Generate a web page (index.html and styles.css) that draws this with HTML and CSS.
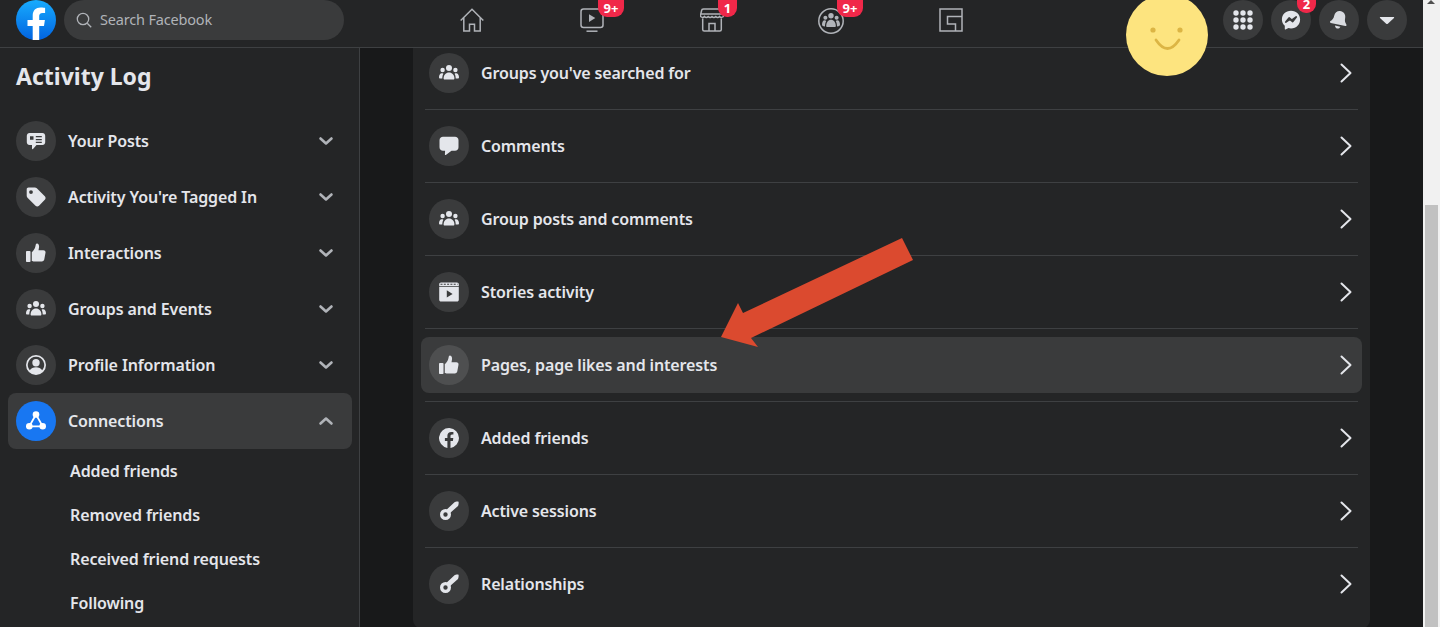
FILE: index.html
```html
<!DOCTYPE html>
<html lang="en">
<head>
<meta charset="utf-8">
<title>Activity Log</title>
<link rel="stylesheet" href="styles.css">
</head>
<body>
<svg class="defs" width="0" height="0" aria-hidden="true">
  <symbol id="i-groups" viewBox="0 0 20 20"><circle cx="10" cy="5" r="3"/><circle cx="3.6" cy="7" r="2.2"/><circle cx="16.4" cy="7" r="2.2"/><path d="M4.6 15.5c0-3.6 2.3-6 5.4-6s5.4 2.4 5.4 6c0 .6-.4 1-1 1H5.600c-.6 0-1-.4-1-1z"/><path d="M3.300 15.600c0-2 .4-3.600 1.100-4.800-.5-.4-1-.5-1.600-.5-1.700 0-2.800 1.700-2.800 4 0 .8.500 1.300 1.200 1.300z"/><path d="M16.700 15.600c0-2-.4-3.600-1.100-4.800.5-.4 1-.5 1.600-.5 1.700 0 2.800 1.700 2.800 4 0 .8-.5 1.300-1.200 1.300z"/></symbol>
  <symbol id="i-like" viewBox="0 0 20 20"><rect x="0" y="8" width="4.500" height="11" rx=".8"/><path d="M5.800 18V9.200c1.700-1.300 3.200-3.500 3.700-6.200.2-1.200.3-2.600 1.500-2.600 1.800 0 2.300 2.300 2 4.200l-.5 2.600h4.800c1.500 0 2.500 1.100 2.200 2.500l-1.200 6.600c-.2 1.300-1.200 2.200-2.500 2.200H8.400c-1.400 0-2-.5-2.600-.5z"/></symbol>
  <symbol id="i-key" viewBox="0 0 20 20"><path fill-rule="evenodd" d="M6.500 8a5.500 5.500 0 1 1 0 11 5.500 5.500 0 0 1 0-11zm0 3.300a2.200 2.200 0 1 0 0 4.400 2.200 2.200 0 0 0 0-4.400z"/><path d="M7.500 8.700 15.500 1.200c.6-.5 3.600-.9 4-.4.4.5 0 3.600-.5 4.200l-8.500 7.500z"/></symbol>
  <symbol id="i-chev" viewBox="0 0 24 24"><path d="M7.500 3.500 16.500 12l-9 8.500" fill="none" stroke="#e4e6eb" stroke-width="2" stroke-linecap="round" stroke-linejoin="round"/></symbol>
  <symbol id="i-down" viewBox="0 0 16 16"><path d="M2.500 5.500 8 10.500l5.500-5" fill="none" stroke="#b0b3b8" stroke-width="2.600" stroke-linecap="round" stroke-linejoin="round"/></symbol>
</svg>

<div class="window">
  <div class="page">
    <header class="topbar">
      <div class="top-left">
        <svg class="logo" viewBox="0 0 40 40"><defs><linearGradient id="fb" x1="0" y1="0" x2="0" y2="1"><stop offset="0" stop-color="#18acfe"/><stop offset="1" stop-color="#0163e0"/></linearGradient></defs><circle cx="20" cy="20" r="20" fill="url(#fb)"/><path fill="#fff" d="M16.700 40V26h-5.200v-6h5.200v-4.300c0-5.300 3.100-8.200 7.900-8.200 2.300 0 4.500.4 4.500.4v5.100h-2.600c-2.500 0-3.300 1.600-3.300 3.200v3.800h5.700l-.9 6h-4.800v14z"/></svg>
        <div class="search">
          <svg class="search-icon" viewBox="0 0 16 16"><circle cx="7" cy="7" r="5.700"/><path d="m11.200 11.200 4 4"/></svg>
          <span class="search-text">Search Facebook</span>
        </div>
      </div>
      <nav class="top-nav">
        <div class="tab">
          <svg class="tab-icon" viewBox="0 0 24 24"><path d="M.700 12.500 12 1.200l11.300 11.300M3.800 9.700V23h5.700v-6.800h5V23h5.700V9.700"/></svg>
        </div>
        <div class="tab">
          <svg class="tab-icon" viewBox="0 0 24 24"><rect x="1" y="1" width="22" height="18.500" rx="2.500"/><path d="M6.500 23.200h11"/><path class="solid" d="M9 6.300v7.600l6.300-3.800z"/></svg>
          <span class="badge badge-watch">9+</span>
        </div>
        <div class="tab">
          <svg class="tab-icon" viewBox="0 0 24 24"><path d="M3.500 1h17c1 0 1.500.4 1.800 1.200L23.500 7v1.500c-1.600 1.300-3 1.300-3.900 0-1.300 1.300-2.700 1.300-3.800 0-1.300 1.300-2.600 1.300-3.800 0-1.200 1.300-2.500 1.300-3.800 0-1.100 1.300-2.500 1.300-3.800 0-.9 1.300-2.300 1.300-3.900 0V7l1.200-4.800C1.700 1.400 2.500 1 3.500 1zM.500 6h23M2.700 10.500V21.500c0 1 .6 1.500 1.500 1.500h15.600c.9 0 1.500-.5 1.500-1.500V10.500M9 23v-7.500h6V23"/></svg>
          <span class="badge badge-market">1</span>
        </div>
        <div class="tab">
          <svg class="tab-icon wide shift" viewBox="0 0 26 26"><circle cx="13" cy="13" r="12.200"/><g class="solid"><circle cx="13" cy="7.800" r="2.700"/><circle cx="7.400" cy="9.800" r="2"/><circle cx="18.600" cy="9.800" r="2"/><path d="M8.200 18c0-3.600 2.100-6.300 4.800-6.300s4.800 2.700 4.800 6.300c0 .6-.4 1-1 1H9.200c-.6 0-1-.4-1-1z"/><path d="M7 18.500c0-2.400.4-4 1.200-5.600-.5-.4-1-.6-1.500-.6-1.700 0-2.700 2-2.700 4.300 0 1.200.9 1.900 3 1.900z"/><path d="M19 18.500c0-2.400-.4-4-1.200-5.600.5-.4 1-.6 1.500-.6 1.700 0 2.700 2 2.700 4.300 0 1.200-.9 1.900-3 1.900z"/></g></svg>
          <span class="badge badge-groups">9+</span>
        </div>
        <div class="tab">
          <svg class="tab-icon shift" viewBox="0 0 24 24"><path d="M1 1h22v22H1zM16.500 23v-7h-8V8.500H23"/></svg>
        </div>
      </nav>
      <div class="top-right">
        <div class="round">
          <svg class="round-icon" viewBox="0 0 20 20"><g fill="#e4e6eb"><circle cx="3" cy="3" r="2.700"/><circle cx="10" cy="3" r="2.700"/><circle cx="17" cy="3" r="2.700"/><circle cx="3" cy="10" r="2.700"/><circle cx="10" cy="10" r="2.700"/><circle cx="17" cy="10" r="2.700"/><circle cx="3" cy="17" r="2.700"/><circle cx="10" cy="17" r="2.700"/><circle cx="17" cy="17" r="2.700"/></g></svg>
        </div>
        <div class="round">
          <svg class="round-icon" viewBox="0 0 20 20"><path fill="#e4e6eb" d="M10 .800C4.600.800.900 4.700.900 9.500c0 2.600 1.100 4.800 2.900 6.300v3.100c0 .4.400.6.700.5l3-1.300c.8.200 1.600.3 2.500.3 5.400 0 9.100-3.900 9.100-8.900S15.400.800 10 .800z"/><path fill="none" stroke="#3a3b3c" stroke-width="1.800" stroke-linejoin="round" stroke-linecap="round" d="m4.800 12 3.300-4 2.700 2.300L15.200 7l-3.500 4.500-2.800-2.200z"/></svg>
          <span class="badge badge-msg">2</span>
        </div>
        <div class="round">
          <svg class="round-icon bell" viewBox="0 0 20 20"><path fill="#d9dbe0" d="M10 1c3.300 0 5.600 2.500 5.600 5.800 0 3 1 4.500 2.500 6 .7.700.3 1.800-.7 1.800H2.600c-1 0-1.400-1.100-.7-1.800 1.500-1.500 2.500-3 2.500-6C4.400 3.500 6.700 1 10 1zM7.200 16.200h5.600c-.4 1.500-1.500 2.500-2.800 2.500s-2.400-1-2.800-2.500z"/></svg>
        </div>
        <div class="round">
          <svg class="round-icon" viewBox="0 0 20 20"><path fill="#e4e6eb" d="M3.500 7h13c.6 0 .9.700.5 1.100l-6.200 5.700c-.5.400-1.100.4-1.600 0L3 8.100C2.600 7.700 2.900 7 3.500 7z"/></svg>
        </div>
      </div>
    </header>

    <div class="body-row">
      <aside class="sidebar">
        <h1 class="side-title">Activity Log</h1>
        <ul class="side-list">
          <li class="side-item">
            <span class="circle"><svg class="ico" viewBox="0 0 20 20"><path fill-rule="evenodd" d="M3.500 2h13C18 2 19.200 3.200 19.200 4.700v6.600c0 1.500-1.200 2.700-2.700 2.700h-6L7 18c-.5.400-1 .1-1-.5V14H3.500C2 14 .8 12.800.8 11.300V4.700C.8 3.200 2 2 3.500 2zM9.800 5h6v1.300h-6zm0 2.900h6v1.300h-6zm0 2.800h6V12h-6zM4 5.300h3.500v3.500H4z"/></svg></span>
            <span class="side-label">Your Posts</span>
            <svg class="chev-down"><use href="#i-down"/></svg>
          </li>
          <li class="side-item">
            <span class="circle"><svg class="ico" viewBox="0 0 20 20"><path fill-rule="evenodd" d="M2.500.500h6.300c.8 0 1.500.3 2 .8l8 7.900c1 1 1 2.500 0 3.500L13 18.800c-1 1-2.500 1-3.500 0l-8-8C1 10.300.700 9.500.700 8.800V2.300C.7 1.300 1.500.500 2.500.500zM5 3.200a1.900 1.900 0 1 0 0 3.800 1.900 1.900 0 0 0 0-3.800z"/></svg></span>
            <span class="side-label">Activity You're Tagged In</span>
            <svg class="chev-down"><use href="#i-down"/></svg>
          </li>
          <li class="side-item">
            <span class="circle"><svg class="ico"><use href="#i-like"/></svg></span>
            <span class="side-label">Interactions</span>
            <svg class="chev-down"><use href="#i-down"/></svg>
          </li>
          <li class="side-item">
            <span class="circle"><svg class="ico"><use href="#i-groups"/></svg></span>
            <span class="side-label">Groups and Events</span>
            <svg class="chev-down"><use href="#i-down"/></svg>
          </li>
          <li class="side-item">
            <span class="circle"><svg class="ico" viewBox="0 0 20 20"><path fill-rule="evenodd" d="M10 0a10 10 0 1 1 0 20 10 10 0 0 1 0-20zm0 1.800a8.200 8.200 0 0 0-6.200 13.500C5 13.300 7.300 12.300 10 12.300s5 1 6.200 3A8.200 8.200 0 0 0 10 1.800zM10 4a3.700 3.700 0 1 1 0 7.400A3.700 3.700 0 0 1 10 4z"/></svg></span>
            <span class="side-label">Profile Information</span>
            <svg class="chev-down"><use href="#i-down"/></svg>
          </li>
          <li class="side-item active">
            <span class="circle blue"><svg class="ico" viewBox="0 0 20 20"><circle cx="10" cy="3.500" r="3.300" fill="#fff"/><circle cx="3.300" cy="15.300" r="3.300" fill="#fff"/><circle cx="16.700" cy="15.300" r="3.300" fill="#fff"/><path d="M10 3.500 3.300 15.300h13.400z" fill="none" stroke="#fff" stroke-width="1.800"/></svg></span>
            <span class="side-label">Connections</span>
            <svg class="chev-down up"><use href="#i-down"/></svg>
          </li>
        </ul>
        <ul class="sub-list">
          <li class="sub-item">Added friends</li>
          <li class="sub-item">Removed friends</li>
          <li class="sub-item">Received friend requests</li>
          <li class="sub-item">Following</li>
        </ul>
      </aside>

      <main class="main">
        <section class="card">
          <div class="row">
            <div class="row-inner"><span class="circle"><svg class="ico"><use href="#i-groups"/></svg></span><span class="row-label">Groups you've searched for</span><svg class="chev"><use href="#i-chev"/></svg></div>
          </div>
          <div class="row">
            <div class="row-inner"><span class="circle"><svg class="ico" viewBox="0 0 20 20"><path d="M4 .800h12c2 0 3.500 1.500 3.500 3.500v6.900c0 2-1.500 3.500-3.500 3.500h-3.500l-5.700 4.200c-.5.300-.9 0-.9-.5l.2-3.700H4C2 14.700.5 13.200.5 11.200V4.300C.5 2.300 2 .800 4 .800z"/></svg></span><span class="row-label">Comments</span><svg class="chev"><use href="#i-chev"/></svg></div>
          </div>
          <div class="row">
            <div class="row-inner"><span class="circle"><svg class="ico"><use href="#i-groups"/></svg></span><span class="row-label">Group posts and comments</span><svg class="chev"><use href="#i-chev"/></svg></div>
          </div>
          <div class="row">
            <div class="row-inner"><span class="circle"><svg class="ico" viewBox="0 0 20 20"><path fill-rule="evenodd" d="M2 .500h16c1 0 1.800.8 1.800 1.800V4H.2V2.300C.2 1.300 1 .5 2 .5zM.2 4.800h19.600v12.900c0 1-.8 1.800-1.800 1.800H2c-1 0-1.800-.8-1.800-1.800zM7.800 8.200v7.400l5.800-3.700z"/><path d="M1.500 2.300h17" fill="none" stroke="#3a3b3c" stroke-width="1.100" stroke-dasharray="2 1.300"/></svg></span><span class="row-label">Stories activity</span><svg class="chev"><use href="#i-chev"/></svg></div>
          </div>
          <div class="row">
            <div class="row-inner is-hover"><span class="circle"><svg class="ico"><use href="#i-like"/></svg></span><span class="row-label">Pages, page likes and interests</span><svg class="chev"><use href="#i-chev"/></svg></div>
          </div>
          <div class="row">
            <div class="row-inner"><span class="circle"><svg class="ico" viewBox="0 0 20 20"><path d="M20 10a10 10 0 1 0-11.600 9.900v-7H5.900V10h2.500V7.800c0-2.500 1.500-3.900 3.800-3.900 1.100 0 2.200.2 2.200.2v2.500h-1.300c-1.200 0-1.600.8-1.600 1.600V10h2.800l-.4 2.900h-2.400v7A10 10 0 0 0 20 10z"/></svg></span><span class="row-label">Added friends</span><svg class="chev"><use href="#i-chev"/></svg></div>
          </div>
          <div class="row">
            <div class="row-inner"><span class="circle"><svg class="ico"><use href="#i-key"/></svg></span><span class="row-label">Active sessions</span><svg class="chev"><use href="#i-chev"/></svg></div>
          </div>
          <div class="row">
            <div class="row-inner"><span class="circle"><svg class="ico"><use href="#i-key"/></svg></span><span class="row-label">Relationships</span><svg class="chev"><use href="#i-chev"/></svg></div>
          </div>
        </section>
      </main>
    </div>

    <div class="smiley">
      <svg viewBox="0 0 84 84" width="84" height="84"><circle cx="42" cy="42" r="41" fill="#fde47f"/><circle cx="28" cy="37" r="2.600" fill="#dcb544"/><circle cx="55" cy="37" r="2.600" fill="#dcb544"/><path d="M31 47q11.500 17 23 0" fill="none" stroke="#dcb544" stroke-width="2.800" stroke-linecap="round"/></svg>
    </div>
    <svg class="arrow" viewBox="0 0 200 120" width="200" height="120"><polygon fill="#db4a2f" points="181,0 192,22 30,100 37,109 0,99 17,65 22,75"/></svg>
  </div>
  <div class="scrollbar">
    <span class="scroll-up"></span>
    <span class="scroll-thumb"></span>
  </div>
</div>
</body>
</html>
```

FILE: styles.css
```css
* { box-sizing: border-box; }
html, body { margin: 0; padding: 0; height: 100%; overflow: hidden; }
body { background: #18191a; color: #e4e6eb; font-family: "Noto Sans", "Open Sans", "Liberation Sans", sans-serif; }
ul { list-style: none; margin: 0; padding: 0; }
.defs { position: absolute; }
svg { display: block; }

.window { display: flex; height: 627px; }
.page { flex: 1; min-width: 0; position: relative; display: flex; flex-direction: column; overflow: hidden; }

/* top bar */
.topbar { height: 48px; flex: none; background: #242526; border-bottom: 1px solid #3e4042; display: flex; position: relative; z-index: 2; }
.top-left { width: 344px; padding-left: 16px; display: flex; gap: 8px; align-items: flex-start; flex: none; }
.logo { width: 40px; height: 40px; }
.search { width: 280px; height: 40px; border-radius: 20px; background: #3a3b3c; display: flex; align-items: center; padding-left: 12px; gap: 8px; color: #b0b3b8; font-size: 14.500px; letter-spacing: -.18px; }
.search-text { padding-bottom: 2px; }
.search-icon { width: 16px; height: 16px; fill: none; stroke: #b0b3b8; stroke-width: 1.300; }
.top-nav { display: flex; margin-left: 68px; width: 600px; }
.tab { width: 120px; height: 40px; position: relative; display: flex; justify-content: center; padding-top: 8px; }
.tab-icon { width: 24px; height: 24px; fill: none; stroke: #b0b3b8; stroke-width: 1.500; }
.tab-icon.wide { width: 26px; height: 26px; }
.tab-icon.shift { margin-right: 2px; }
.tab-icon .solid { fill: #b0b3b8; stroke: none; }
.badge { position: absolute; top: 0; height: 17px; min-width: 19px; padding: 0 4px; border-radius: 0 0 9px 9px; background: #f02849; color: #fff; font-size: 13px; font-weight: 700; line-height: 16px; text-align: center; }
.badge-watch { left: 66px; width: 26px; }
.badge-market { left: 66px; }
.badge-groups { left: 65px; width: 26px; }
.badge-msg { left: 26px; height: 13px; line-height: 9px; }
.top-right { margin-left: auto; margin-right: 16px; display: flex; gap: 8px; }
.round { width: 40px; height: 40px; border-radius: 50%; background: #3a3b3c; display: flex; align-items: center; justify-content: center; position: relative; }
.round-icon { width: 20px; height: 20px; }
.bell { transform: rotate(12deg); }

/* body */
.body-row { flex: 1; min-height: 0; display: flex; }
.sidebar { width: 360px; flex: none; background: #242526; border-right: 1px solid #3e4042; padding: 0 7px 0 8px; overflow: hidden; }
.side-title { margin: 10px 0 0 8px; height: 36px; font-size: 23px; line-height: 36px; font-weight: 700; }
.side-list { margin-top: 19px; }
.side-item { height: 56px; display: flex; align-items: center; padding: 0 18px 0 8px; border-radius: 8px; }
.side-item.active { background: #3a3b3c; }
.circle { width: 40px; height: 40px; border-radius: 50%; background: #3a3b3c; flex: none; display: flex; align-items: center; justify-content: center; }
.circle.blue { background: #1877f2; }
.ico { width: 20px; height: 20px; fill: #e4e6eb; }
.side-label { margin-left: 12px; font-size: 16px; font-weight: 600; letter-spacing: -.12px; flex: 1; }
.chev-down { width: 16px; height: 16px; }
.chev-down.up { transform: rotate(180deg); }
.sub-item { height: 44px; padding-left: 62px; font-size: 16px; font-weight: 600; letter-spacing: -.12px; line-height: 44px; }

/* main */
.main { flex: 1; min-width: 0; display: flex; justify-content: center; overflow: hidden; }
.card { width: 957px; margin-top: -11px; background: #242526; border-radius: 8px; padding: 0 8px 7px; align-self: flex-start; }
.row { height: 73px; padding: 8px 0; margin: 0 4px; border-bottom: 1px solid #3e4042; }
.row:last-child { border-bottom: 0; }
.row-inner { height: 56px; margin: 0 -4px; padding: 0 8px; display: flex; align-items: center; border-radius: 8px; }
.row-inner.is-hover { background: #3a3b3c; }
.row-inner.is-hover .circle { background: #4e4f50; }
.row-label { margin-left: 12px; font-size: 16px; font-weight: 600; letter-spacing: -.14px; flex: 1; }
.chev { width: 24px; height: 24px; margin-right: -4px; }

/* overlays */
.smiley { position: absolute; left: 1125px; top: -7px; z-index: 3; filter: blur(.6px); }
.arrow { position: absolute; left: 721px; top: 238px; z-index: 3; filter: blur(.4px); }

/* scrollbar */
.scrollbar { width: 17px; flex: none; background: #f1f1f1; position: relative; }
.scroll-up { position: absolute; left: 4px; top: 0; width: 0; height: 0; border-left: 4px solid transparent; border-right: 4px solid transparent; border-bottom: 4px solid #505050; }
.scroll-thumb { position: absolute; left: 2px; right: 2px; top: 205px; bottom: 0; background: #c1c1c1; }
```
